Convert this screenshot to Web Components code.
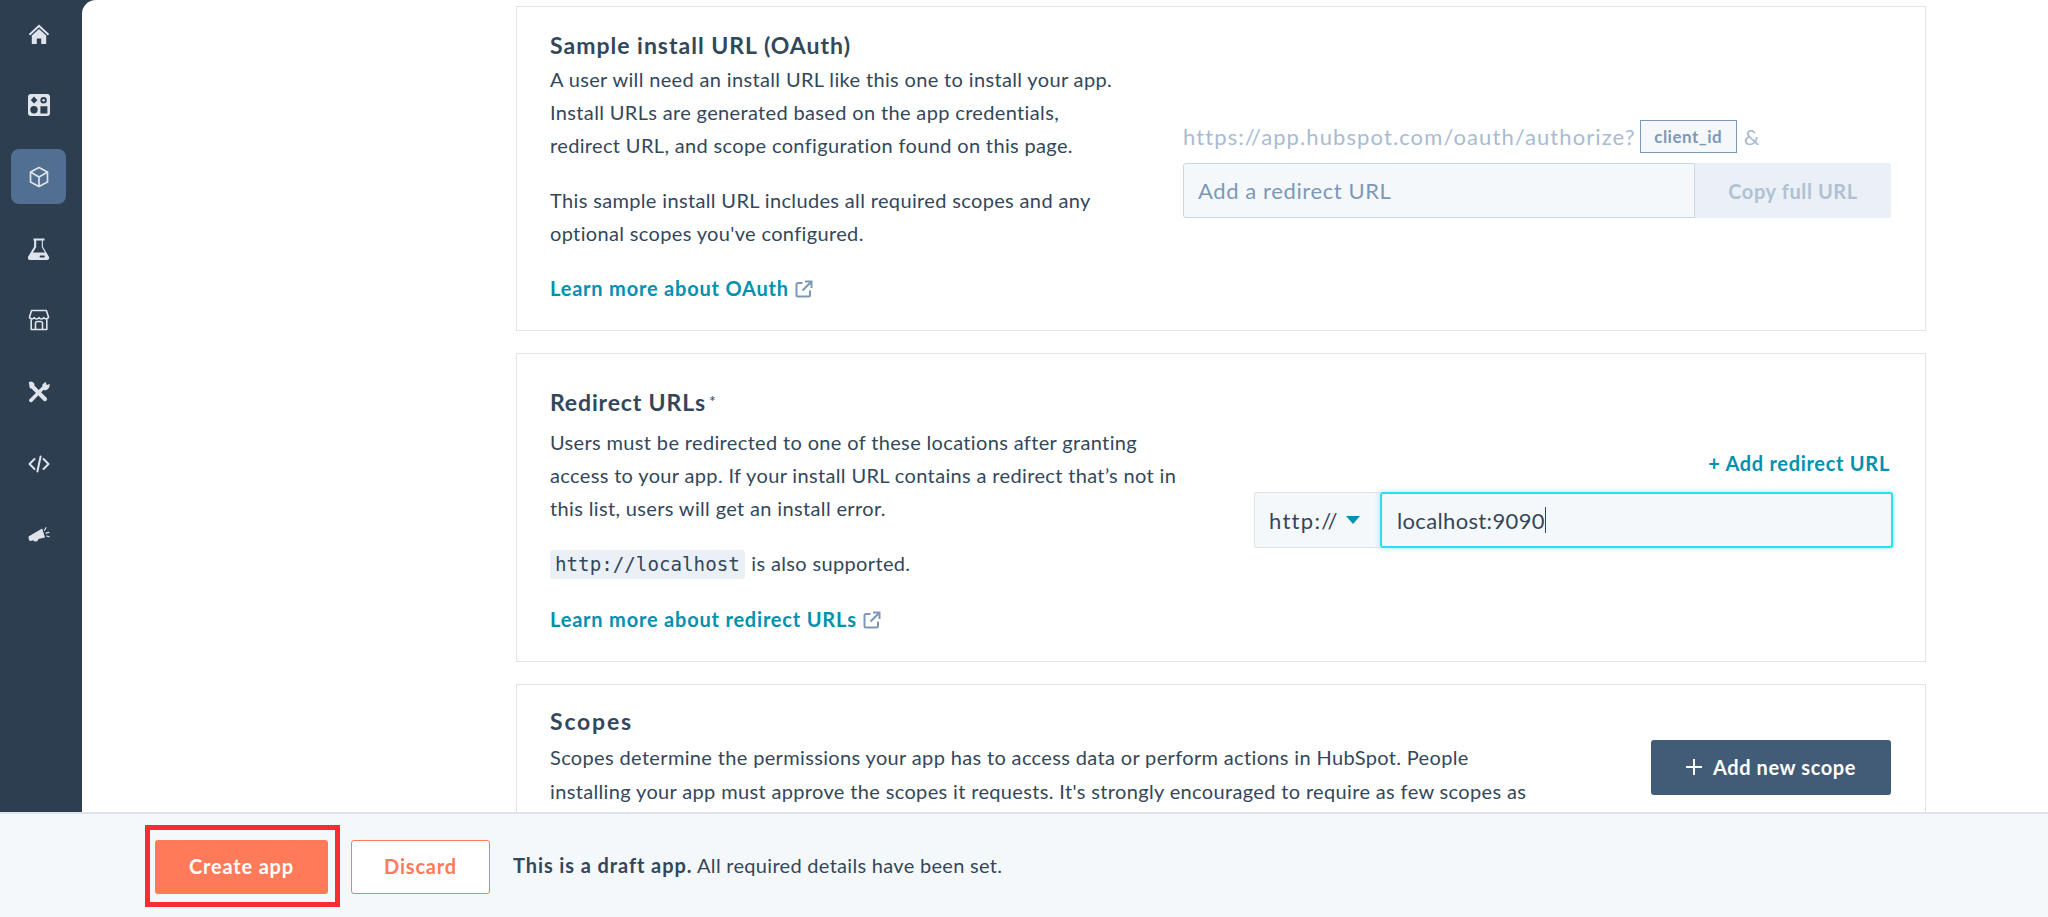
<!DOCTYPE html>
<html lang="en">
<head>
<meta charset="utf-8">
<title>Create app</title>
<style>
    html, body { margin: 0; height: 100%; overflow: hidden; }
    body { font-family: Lato, "Noto Sans", sans-serif; color: #33475b; background: #fff; }
</style>
</head>
<body>
<app-page></app-page>
<script>
const icons = {
    home: `<path d="M11 1.5 0.8 11l1.3 1.4L11 4.2l8.9 8.2 1.3-1.4z"/><path d="M3.8 12.6 11 6l7.2 6.6V21h-5v-5.4H8.8V21h-5z"/>`,
    grid: `<path fill-rule="evenodd" d="M3 0h16a3 3 0 0 1 3 3v16a3 3 0 0 1-3 3H3a3 3 0 0 1-3-3V3a3 3 0 0 1 3-3zM6 2.6 2.8 6.2 6 9.6l3.4-3.4zM15.6 3a3.2 3.2 0 1 0 0 6.4 3.2 3.2 0 0 0 0-6.4zM6 12a3.7 3.7 0 1 0 0 7.4A3.7 3.7 0 0 0 6 12zm6.4.2v7.2h7v-7.2z"/><circle cx="15.6" cy="6.2" r="1.2"/>`,
    cube: `<g fill="none" stroke="currentColor" stroke-width="1.7" stroke-linejoin="round"><path d="M11 1.5 19.5 6v10L11 20.5 2.5 16V6z"/><path d="M2.8 6.2 11 11l8.2-4.8M11 11v9.4"/></g>`,
    flask: `<path fill-rule="evenodd" d="M5.5 0.5h11v2h-1.6v6.2l6 10a2.2 2.2 0 0 1-1.9 3.3H2a2.2 2.2 0 0 1-1.9-3.3l6-10V2.5H5.5zM8.2 2.5v6.8L5 14.6h12l-3.2-5.3V2.5zM12.5 17.6a.9.9 0 0 0 0 1.8h3.4a.9.9 0 0 0 0-1.8z"/>`,
    store: `<g fill="none" stroke="currentColor" stroke-width="1.6" stroke-linejoin="round"><path d="M3.6 1.5h14.8L20.5 8c-.4 2.4-3.6 2.4-4.7.6-1 1.8-3.800 1.800-4.800 0-1 1.800-3.800 1.800-4.800 0C5.100 10.400 1.900 10.400 1.500 8z"/><path d="M3.200 10.500V20.500h15.600V10.500"/><path d="M7.500 20.500v-6a2 2 0 0 1 2-2h3a2 2 0 0 1 2 2v6"/></g>`,
    tools: `<path d="M1 18.800 14.500 5.300l-.3-1.500 3.300-3 1.200 3.100 3-1c.3 2.800-1.500 6.300-5 6.300l-1.300-.3L4 20.900a2 2 0 0 1-3-2.100z"/><path d="M.8 1 4 .6l2.200 2 .4 2.200L18.800 17a2.100 2.100 0 0 1-2.900 2.900L3.700 7.700 1.700 7z"/>`,
    code: `<g fill="none" stroke="currentColor" stroke-width="2" stroke-linecap="round" stroke-linejoin="round"><path d="M6.500 6 1.500 11l5 5M15.500 6l5 5-5 5"/><path d="M12.600 3.500 9.400 18.500"/></g>`,
    mega: `<path d="M0.500 12.500 14.200 4.500l2.800 9-6.600 1.500a2.900 2.900 0 0 1-5.300 1.300L2.700 16.900a1.700 1.700 0 0 1-1.900-1.300zM6.600 16.300l2.100-.5a1.300 1.300 0 0 1-2.100.5z"/><g fill="none" stroke="currentColor" stroke-width="1.200" stroke-linecap="round"><path d="M16.500 6.300l1.500-2.600M18 9.200l2.900-.8M18.600 12l2.600.8"/></g>`
};

const extLink = `<svg width="18" height="18" viewBox="0 0 18 18" fill="none" stroke="#7c98b6" stroke-width="2"><path d="M7.500 3H3a1.500 1.500 0 0 0-1.500 1.500V15A1.500 1.500 0 0 0 3 16.500h10.500A1.500 1.500 0 0 0 15 15v-4.500"/><path d="M10 1.500h6.500V8M16.300 1.700 7.500 10.500"/></svg>`;

class NavItem extends HTMLElement {
    constructor() {
        super();
        let shadowRoot = this.attachShadow({mode:'open'});
        shadowRoot.innerHTML = `
            <style>
                :host { display: flex; width: 55px; height: 55px; align-items: center; justify-content: center; border-radius: 8px; color: #dfe3eb; }
                :host([active]) { background: #516f90; }
                svg { width: 22px; height: 22px; fill: currentColor; display: block; }
            </style>
            <svg viewBox="0 0 22 22">${icons[this.getAttribute('icon')]}</svg>`;
    }
}
customElements.define('nav-item', NavItem);

class SideBar extends HTMLElement {
    constructor() {
        super();
        let shadowRoot = this.attachShadow({mode:'open'});
        shadowRoot.innerHTML = `
            <style>
                :host { display: flex; flex-direction: column; align-items: center; width: 77px; padding: 6px 5px 0 0; gap: 16.700px; background: #2d3e50; flex: none; }
            </style>
            <nav-item icon="home"></nav-item>
            <nav-item icon="grid"></nav-item>
            <nav-item icon="cube" active></nav-item>
            <nav-item icon="flask"></nav-item>
            <nav-item icon="store"></nav-item>
            <nav-item icon="tools"></nav-item>
            <nav-item icon="code"></nav-item>
            <nav-item icon="mega"></nav-item>`;
    }
}
customElements.define('side-bar', SideBar);

class InfoCard extends HTMLElement {
    constructor() {
        super();
        let shadowRoot = this.attachShadow({mode:'open'});
        shadowRoot.innerHTML = `
            <style>
                :host { display: flex; justify-content: space-between; box-sizing: border-box; border: 1px solid #dfe3eb; background: #fff; padding: var(--top, 23px) 34px var(--bottom, 25px) 33px; }
                h2 { margin: 0 0 var(--title-gap, 3px); font-size: 23px; line-height: 30px; font-weight: 700; letter-spacing: var(--title-ls, 1px); color: #33475b; }
                h2 sup { font-size: 16px; font-weight: 400; line-height: 0; margin-left: 3px; vertical-align: 4px; }
                ::slotted(p) { margin: 0 0 22px; font-size: 20px; letter-spacing: .35px; line-height: var(--lh, 33px); font-weight: 400; color: #33475b; white-space: nowrap; }
                ::slotted(.end) { margin-bottom: 0; }
            </style>
            <div class="main">
                <h2>${this.getAttribute('heading')}${this.hasAttribute('required') ? '<sup>*</sup>' : ''}</h2>
                <slot></slot>
            </div>
            <slot name="aside"></slot>`;
    }
}
customElements.define('info-card', InfoCard);

class LearnLink extends HTMLElement {
    constructor() {
        super();
        let shadowRoot = this.attachShadow({mode:'open'});
        shadowRoot.innerHTML = `
            <style>
                :host { display: inline-flex; align-items: center; gap: 6px; color: #0091ae; font-weight: 700; font-size: 20px; letter-spacing: .8px; line-height: 33px; }
            </style>
            <slot></slot>${extLink}`;
    }
}
customElements.define('learn-link', LearnLink);

class InstallUrl extends HTMLElement {
    constructor() {
        super();
        let shadowRoot = this.attachShadow({mode:'open'});
        shadowRoot.innerHTML = `
            <style>
                :host { display: block; width: 708px; margin-top: 90px; }
                .url { display: flex; align-items: center; height: 33px; font-size: 22px; letter-spacing: 1.100px; color: #a9bbd0; white-space: nowrap; }
                .tag { box-sizing: border-box; height: 33px; width: 97px; margin: 0 7px 0 4px; display: flex; align-items: center; justify-content: center; background: #f5f8fa; border: 1px solid #7c98b6; color: #7c98b6; font-size: 17px; letter-spacing: .5px; font-weight: 700; }
                .row { display: flex; margin-top: 10px; height: 55px; }
                .field { box-sizing: border-box; width: 512px; border: 1px solid #cbd6e2; border-radius: 3px 0 0 3px; background: #f5f8fa; color: #7c98b6; font-size: 22px; letter-spacing: .6px; display: flex; align-items: center; padding-left: 14px; }
                .copy { flex: 1; background: #eaf0f6; border-radius: 0 3px 3px 0; color: #b0c1d4; font-size: 20px; letter-spacing: .6px; font-weight: 700; display: flex; align-items: center; justify-content: center; }
            </style>
            <div class="url">https://app.hubspot.com/oauth/authorize?<span class="tag">client_id</span>&amp;</div>
            <div class="row">
                <div class="field">Add a redirect URL</div>
                <div class="copy">Copy full URL</div>
            </div>`;
    }
}
customElements.define('install-url', InstallUrl);

class RedirectField extends HTMLElement {
    constructor() {
        super();
        let shadowRoot = this.attachShadow({mode:'open'});
        shadowRoot.innerHTML = `
            <style>
                :host { display: block; width: 639px; margin-top: 62px; margin-right: -2px; }
                .add { height: 28px; line-height: 28px; text-align: right; padding-right: 3px; color: #0091ae; font-size: 20px; letter-spacing: .7px; font-weight: 700; }
                .row { display: flex; margin-top: 15px; height: 56px; }
                .proto { box-sizing: border-box; width: 126px; border: 1px solid #dfe3eb; border-right: 0; border-radius: 3px 0 0 3px; background: #f5f8fa; display: flex; align-items: center; gap: 7px; padding-left: 14px; font-size: 22px; letter-spacing: 1.300px; color: #33475b; }
                .caret { width: 0; height: 0; border: 7px solid transparent; border-top: 8px solid #0091ae; border-bottom: 0; }
                .input { flex: 1; box-sizing: border-box; border: 2px solid #2cdff0; border-radius: 3px; background: #f5f8fa; box-shadow: 0 0 4px 1px rgba(0,208,228,.3); display: flex; align-items: center; padding-left: 15px; font-size: 22px; letter-spacing: .35px; color: #33475b; }
                .cursor { width: 1px; height: 26px; background: #33475b; }
            </style>
            <div class="add">+ Add redirect URL</div>
            <div class="row">
                <div class="proto">http://<span class="caret"></span></div>
                <div class="input">localhost:9090<span class="cursor"></span></div>
            </div>`;
    }
}
customElements.define('redirect-field', RedirectField);

class HsButton extends HTMLElement {
    constructor() {
        super();
        let shadowRoot = this.attachShadow({mode:'open'});
        shadowRoot.innerHTML = `
            <style>
                :host { display: inline-flex; position: relative; box-sizing: border-box; align-items: center; justify-content: center; gap: 11px; height: 54px; padding-bottom: 2px; border-radius: 3px; font-size: 20px; letter-spacing: .8px; font-weight: 700; white-space: nowrap; }
                :host([kind=primary]) { background: #ff7a59; color: #fff; width: 173px; }
                :host([kind=secondary]) { background: #fff; color: #ff7a59; border: 1px solid #ff7a59; width: 139px; }
                :host([kind=dark]) { background: #425b76; color: #fff; width: 240px; height: 55px; letter-spacing: .6px; }
                .mark { position: absolute; inset: -15px -12px -13px -10px; border: 5px solid #fb2c30; pointer-events: none; }
                svg { display: block; }
            </style>
            ${this.getAttribute('kind') == 'dark' ? '<svg width="16" height="16" viewBox="0 0 16 16" fill="#fff"><path d="M7 0h2v7h7v2H9v7H7V9H0V7h7z"/></svg>' : ''}
            <slot></slot>
            ${this.hasAttribute('marked') ? '<span class="mark"></span>' : ''}`;
    }
}
customElements.define('hs-button', HsButton);

class SaveBar extends HTMLElement {
    constructor() {
        super();
        let shadowRoot = this.attachShadow({mode:'open'});
        shadowRoot.innerHTML = `
            <style>
                :host { display: flex; flex: none; box-sizing: border-box; height: 105px; background: #f5f8fa; border-top: 2px solid #dfe3eb; padding: 26px 0 0 155px; gap: 23px; align-items: flex-start; }
                .msg { height: 50px; display: flex; align-items: center; font-size: 20px; letter-spacing: .3px; color: #33475b; white-space: pre; }
                b { font-weight: 700; letter-spacing: .9px; }
            </style>
            <hs-button kind="primary" marked>Create app</hs-button>
            <hs-button kind="secondary">Discard</hs-button>
            <div class="msg"><b>This is a draft app.</b> All required details have been set.</div>`;
    }
}
customElements.define('save-bar', SaveBar);

class AppPage extends HTMLElement {
    constructor() {
        super();
        let shadowRoot = this.attachShadow({mode:'open'});
        shadowRoot.innerHTML = `
            <style>
                :host { display: flex; flex-direction: column; height: 917px; overflow: hidden; }
                .top { flex: 1; min-height: 0; display: flex; background: #2d3e50; }
                .content { flex: 1; background: #fff; border-top-left-radius: 14px; overflow: hidden; padding: 6px 0 0 434px; }
                .cards { width: 1410px; display: flex; flex-direction: column; gap: 22px; }
                code { font-family: "DejaVu Sans Mono", "Liberation Mono", monospace; font-size: 19.200px; letter-spacing: 0; background: #eaf0f6; border-radius: 3px; padding: 3px 5px; margin: 0 1px 0 0; }
            </style>
            <div class="top">
                <side-bar></side-bar>
                <div class="content">
                    <div class="cards">
                        <info-card heading="Sample install URL (OAuth)">
                            <p>A user will need an install URL like this one to install your app.<br>Install URLs are generated based on the app credentials,<br>redirect URL, and scope configuration found on this page.</p>
                            <p>This sample install URL includes all required scopes and any<br>optional scopes you've configured.</p>
                            <p class="end"><learn-link>Learn more about OAuth</learn-link></p>
                            <install-url slot="aside"></install-url>
                        </info-card>
                        <info-card heading="Redirect URLs" required style="--top:33px;--title-gap:9px;--title-ls:.85px;--bottom:25px">
                            <p>Users must be redirected to one of these locations after granting<br>access to your app. If your install URL contains a redirect that’s not in<br>this list, users will get an install error.</p>
                            <p><code>http://localhost</code> is also supported.</p>
                            <p class="end"><learn-link>Learn more about redirect URLs</learn-link></p>
                            <redirect-field slot="aside"></redirect-field>
                        </info-card>
                        <info-card heading="Scopes" style="--lh:34px;--top:21px;--title-ls:1.800px;--title-gap:4px">
                            <p>Scopes determine the permissions your app has to access data or perform actions in HubSpot. People<br>installing your app must approve the scopes it requests. It's strongly encouraged to require as few scopes as</p>
                            <hs-button slot="aside" kind="dark" style="margin-top:34px">Add new scope</hs-button>
                        </info-card>
                    </div>
                </div>
            </div>
            <save-bar></save-bar>`;
    }
}
customElements.define('app-page', AppPage);
</script>
</body>
</html>
